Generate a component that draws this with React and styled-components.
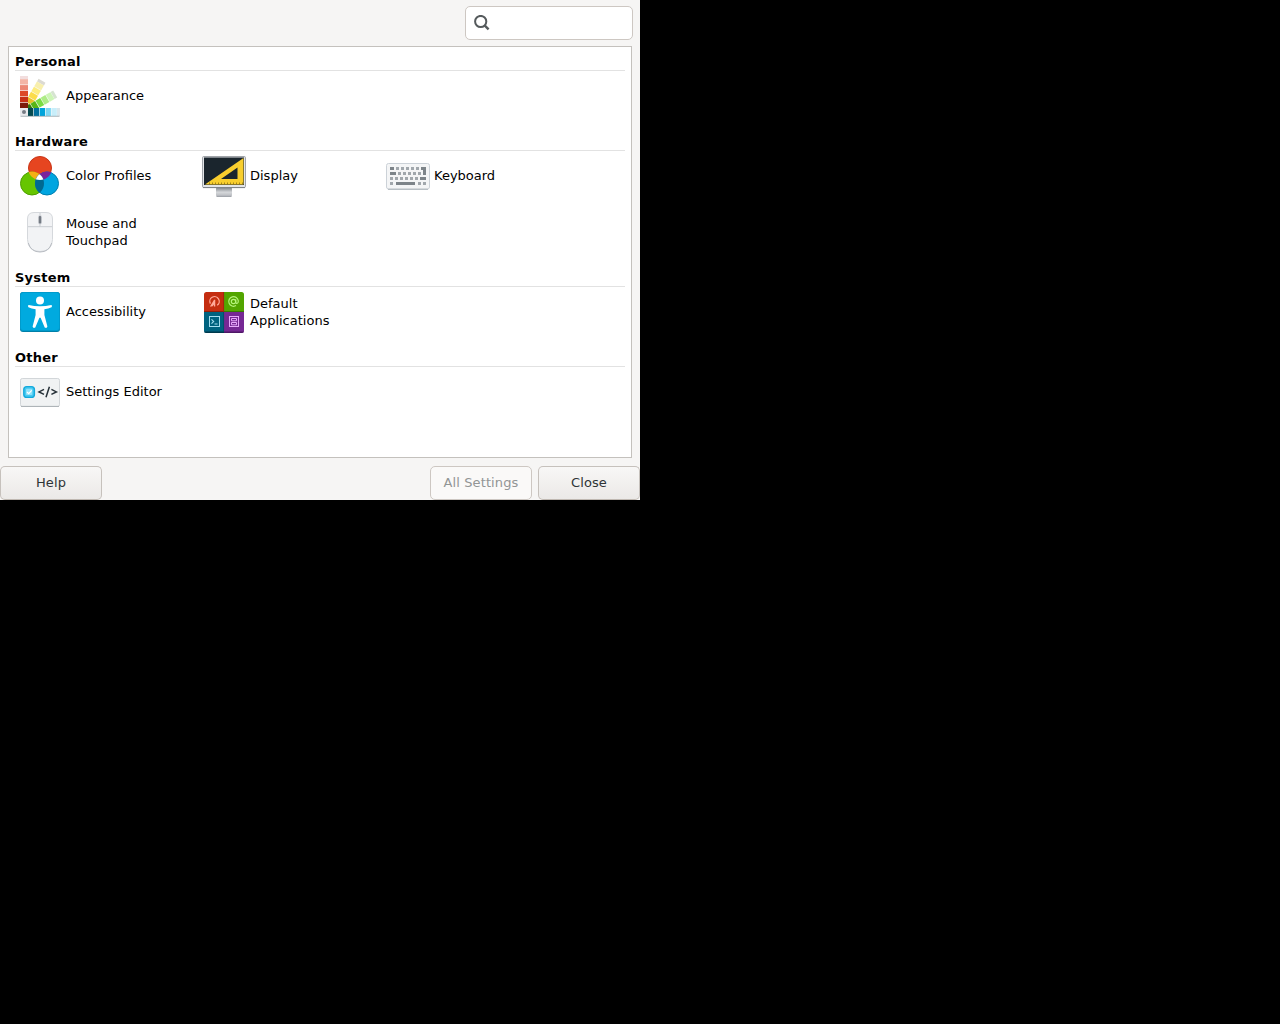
import React from "react";
import styled, { createGlobalStyle } from "styled-components";

const GlobalStyle = createGlobalStyle`
  html, body { margin: 0; background: #000; }
  * { box-sizing: border-box; }
`;

const Window = styled.main`
  width: 640px;
  height: 500px;
  display: flex;
  flex-direction: column;
  background: #f6f5f4;
  color: #000;
  font: 13px/17px "DejaVu Sans", sans-serif;
`;

const TopBar = styled.header`
  display: flex;
  justify-content: flex-end;
  padding: 6px 7px 6px 0;
`;

const SearchField = styled.label`
  width: 168px;
  height: 34px;
  display: flex;
  align-items: center;
  padding: 0 8px;
  background: #fff;
  border: 1px solid #cdc7c2;
  border-radius: 5px;
`;

const SearchInput = styled.input`
  flex: 1;
  min-width: 0;
  border: 0;
  outline: 0;
  background: transparent;
  font: inherit;
`;

const Panel = styled.div`
  height: 412px;
  margin: 0 8px;
  padding: 6px 6px 0;
  background: #fff;
  border: 1px solid #c4c1bd;
`;

const Section = styled.section`
  padding-bottom: 12px;
`;

const Heading = styled.h2`
  height: 18px;
  margin: 0;
  font-size: 13px;
  line-height: 17px;
  font-weight: bold;
  letter-spacing: 0.22px;
  border-bottom: 1px solid #e2e2e2;
`;

const Grid = styled.div`
  display: grid;
  grid-template-columns: repeat(3, 184px);
  grid-auto-rows: 50px;
  row-gap: 6px;
  padding-left: 1px;
`;

const Item = styled.div`
  display: flex;
  align-items: center;
  gap: 2px;
`;

const ItemLabel = styled.span`
  width: 110px;
  padding-bottom: 1px;
`;

const Footer = styled.footer`
  display: flex;
  gap: 6px;
  margin-top: 8px;
`;

const Button = styled.button`
  width: 102px;
  height: 34px;
  padding: 0 0 1px;
  font: inherit;
  letter-spacing: 0.1px;
  color: ${(p) => (p.disabled ? "#929595" : "#2e3436")};
  background: ${(p) => (p.disabled ? "#faf9f8" : "linear-gradient(#f8f7f6, #ebe9e7)")};
  border: 1px solid ${(p) => (p.disabled ? "#cdc7c2" : "#c6c1bc")};
  border-bottom-color: ${(p) => (p.disabled ? "#cdc7c2" : "#bfb8b1")};
  border-radius: 5px;
  margin-right: ${(p) => (p.$lead ? "auto" : "0")};
`;

const IconSvg = styled.svg`
  flex: none;
  display: block;
`;

const Icon = ({ children }) => (
  <IconSvg width="48" height="48" viewBox="0 0 48 48" fill="none">
    {children}
  </IconSvg>
);

const Strip = ({ angle, colors, label }) => (
  <g transform={`rotate(${angle} 8 40)`}>
    <rect x="4" y="4" width="8" height="36" fill="#fafafa" />
    <rect x="4" y="4" width="8" height="3" fill={label} />
    {colors.map((c, i) => (
      <rect key={c} x="4" y={7.2 + i * 5.9} width="8" height="5.3" fill={c} />
    ))}
  </g>
);

const AppearanceIcon = () => (
  <Icon>
    <Strip angle={30} label="#dcdad2" colors={["#f8efad", "#fdec7e", "#fbdc4a", "#e8bf25", "#b08c18"]} />
    <Strip angle={60} label="#d6e4d0" colors={["#cdf5b6", "#aeec86", "#7bdc42", "#57b515", "#347b0b"]} />
    <Strip angle={90} label="#dce7ec" colors={["#c8eefa", "#7dd6f2", "#00a4db", "#006f9e", "#064a50"]} />
    <Strip angle={0} label="#f2dede" colors={["#f3b5a6", "#ec8875", "#dd4928", "#c73117", "#7c1b0b"]} />
    <rect x="4" y="36" width="8" height="8" rx="1" fill="#e9eaed" />
    <circle cx="8" cy="40" r="2" fill="#777c85" />
    <path d="M4.5 44.3h39" stroke="#8a9aa0" strokeWidth=".7" />
  </Icon>
);

const ColorIcon = () => (
  <Icon>
    <defs>
      <clipPath id="clipRed"><circle cx="24" cy="16" r="12" /></clipPath>
      <clipPath id="clipGreen"><circle cx="16" cy="31.5" r="12" /></clipPath>
    </defs>
    <circle cx="24" cy="16" r="11.5" fill="#e64520" stroke="#c93416" />
    <circle cx="16" cy="31.5" r="11.5" fill="#66c500" stroke="#4f9f00" />
    <circle cx="31" cy="31.5" r="11.5" fill="#00a5e0" stroke="#007fae" />
    <g clipPath="url(#clipRed)">
      <circle cx="16" cy="31.5" r="12" fill="#f4af16" />
      <circle cx="31" cy="31.5" r="12" fill="#7b239b" />
    </g>
    <g clipPath="url(#clipGreen)">
      <circle cx="31" cy="31.5" r="12" fill="#006a91" />
      <g clipPath="url(#clipRed)"><circle cx="31" cy="31.5" r="12" fill="#fff" /></g>
    </g>
  </Icon>
);

const DisplayIcon = () => (
  <Icon>
    <defs>
      <linearGradient id="stand" x1="0" y1="0" x2="0" y2="1">
        <stop stopColor="#777d84" /><stop offset=".55" stopColor="#d5d7da" /><stop offset="1" stopColor="#b5b8bd" />
      </linearGradient>
    </defs>
    <rect x="16" y="35" width="16" height="9.5" rx="1.5" fill="url(#stand)" />
    <path d="M16.5 44.4h15" stroke="#8b9097" strokeWidth=".8" />
    <rect x="2.5" y="4.5" width="43" height="31" rx="1.2" fill="#e3e5e8" stroke="#a0a4a9" />
    <path d="M3 35.6h42" stroke="#7d8287" />
    <rect x="4" y="5.5" width="40" height="27.5" fill="#1a252d" />
    <path fillRule="evenodd" d="M5 32.5 43.5 6v26.5ZM21 27h16.5V15.5Z" fill="#f8ce2e" />
    <path d="M9 31.5h34" stroke="#8f7414" strokeWidth="2" strokeDasharray=".8 2.2" />
  </Icon>
);

const Keys = ({ y, xs }) => xs.map((x) => <rect key={x} x={x} y={y} width="3" height="3" />);

const KeyboardIcon = () => (
  <Icon>
    <rect x="2.5" y="11.5" width="43" height="25.5" rx="2" fill="#f4f5f6" stroke="#ccd2d8" />
    <path d="M4 37.3h40" stroke="#adb4bb" />
    <g fill="#a1a7ac">
      <Keys y={15} xs={[12, 17, 22, 27, 32]} />
      <Keys y={20} xs={[14, 19, 24, 29, 34]} />
      <Keys y={25} xs={[6, 11, 16, 21, 26, 31]} />
      <Keys y={30} xs={[6, 34, 39]} />
    </g>
    <g fill="#7d8489">
      <path d="M6 15h4v3H6zM6 20h6v3H6zM36 25h6v3h-6zM12 30h19v3H12zM37 15h5v8h-3v-5h-2z" />
    </g>
  </Icon>
);

const MouseIcon = () => (
  <Icon>
    <path d="M11.5 11Q11.5 4.5 18 4.5H30Q36.5 4.5 36.5 11V31.5Q36 43.5 24 43.5T11.5 31.5Z" fill="#f2f3f5" stroke="#d5d8dc" />
    <path d="M12.3 35Q15 44 24 44T35.7 35" stroke="#b9bdc3" />
    <path d="M12 18.7h24M24 5v3M24 16v3" stroke="#c9cdd2" />
    <rect x="22.1" y="7" width="3.8" height="9.5" rx="1.9" fill="#d0d3d8" />
    <rect x="22.8" y="8" width="2.4" height="7.5" rx="1" fill="#747a83" />
  </Icon>
);

const AccessibilityIcon = () => (
  <Icon>
    <rect x="4" y="4" width="40" height="40" rx="3" fill="#007fa8" />
    <rect x="4.5" y="4.5" width="39" height="38" rx="2.5" fill="#00aadf" stroke="#009bcc" />
    <circle cx="24" cy="12.4" r="4" fill="#fff" />
    <path d="M12.8 17Q18 18.3 24 18.3T35.2 17Q36.8 17.6 35.6 19.2Q32.5 20.6 28.4 21.2V27L31.4 38.6Q30.8 40.7 28.7 39.5L24.6 29.7H23.4L19.3 39.5Q17.2 40.7 16.6 38.6L19.6 27V21.2Q15.5 20.6 12.4 19.2Q11.2 17.6 12.8 17Z" fill="#fff" />
  </Icon>
);

const ApplicationsIcon = () => (
  <Icon>
    <defs><clipPath id="tile"><rect x="4" y="4" width="40" height="41" rx="2.5" /></clipPath></defs>
    <g clipPath="url(#tile)">
      <rect x="4" y="4" width="20" height="20" fill="#c42d10" />
      <rect x="24" y="4" width="20" height="20" fill="#52a500" />
      <rect x="4" y="24" width="20" height="21" fill="#006380" />
      <rect x="24" y="24" width="20" height="21" fill="#762894" />
      <path d="M4 23.5h20" stroke="#8f200c" />
      <path d="M24 23.5h20" stroke="#377900" />
      <path d="M4 44.3h20" stroke="#00394c" strokeWidth="1.4" />
      <path d="M24 44.3h20" stroke="#4e1766" strokeWidth="1.4" />
      <path d="M23.6 4v20" stroke="#992610" strokeWidth=".8" />
      <path d="M23.6 24v20" stroke="#004c63" strokeWidth=".8" />
    </g>
    <path d="M10.4 15.6A4.7 4.7 0 1 1 17.2 17.2" stroke="#ffa999" strokeWidth="1.3" />
    <path d="M14.6 11.8V18.6M14.6 12 10.6 18.6M14.6 14.5 12 18" stroke="#ffa999" strokeWidth="1.3" />
    <circle cx="33.5" cy="13.5" r="2.2" stroke="#b6f47c" strokeWidth="1.2" />
    <path d="M35.7 11.2v3.2q.4 1.3 1.6.9 1.2-.6 1-2.4a4.8 4.8 0 1 0-2.3 4.7" stroke="#b6f47c" strokeWidth="1.2" />
    <rect x="9.5" y="28.5" width="10" height="10" stroke="#a3def0" />
    <path d="m11.5 31.3 2.2 2.2-2.2 2.2M14.5 36h3" stroke="#a3def0" strokeWidth="1.1" />
    <rect x="29.5" y="28.5" width="9" height="10" stroke="#e7a9fb" />
    <path d="M31.5 30.5h5v2.3h-5zM31.5 34.5h5v2.3h-5z" stroke="#e7a9fb" />
  </Icon>
);

const EditorIcon = () => (
  <Icon>
    <rect x="4.5" y="10.5" width="39" height="28" rx="1.8" fill="#f0f2f3" stroke="#d2d6d9" />
    <path d="M5 38.4h38" stroke="#abb0b5" />
    <rect x="7.8" y="18.6" width="10.6" height="10.8" rx="3" fill="#47c9f1" stroke="#12a9dc" strokeWidth="1.4" />
    <rect x="10" y="20.8" width="6.3" height="6.3" rx="1" fill="#8ee2fa" />
    <path d="m11 24 1.7 1.7 3-3.4" stroke="#fff" strokeWidth="1.2" />
    <path d="m28 21.4-5 2.5 5 2.5M35.4 21.4l5 2.5-5 2.5M33.4 18.8 30 29.3" stroke="#273239" strokeWidth="1.5" />
  </Icon>
);

const SearchIcon = () => (
  <IconSvg width="16" height="16" viewBox="0 0 16 16" fill="none" stroke="#555a5c" strokeWidth="2">
    <circle cx="6.7" cy="6.5" r="5.6" />
    <path d="m10.6 10.4 4 4" strokeWidth="2.4" />
  </IconSvg>
);

const sections = [
  { title: "Personal", items: [["Appearance", AppearanceIcon]] },
  {
    title: "Hardware",
    items: [
      ["Color Profiles", ColorIcon],
      ["Display", DisplayIcon],
      ["Keyboard", KeyboardIcon],
      ["Mouse and Touchpad", MouseIcon],
    ],
  },
  {
    title: "System",
    items: [
      ["Accessibility", AccessibilityIcon],
      ["Default Applications", ApplicationsIcon],
    ],
  },
  { title: "Other", items: [["Settings Editor", EditorIcon]] },
];

export default function App() {
  return (
    <>
      <GlobalStyle />
      <Window>
        <TopBar>
          <SearchField>
            <SearchIcon />
            <SearchInput aria-label="Search" />
          </SearchField>
        </TopBar>
        <Panel>
          {sections.map(({ title, items }) => (
            <Section key={title}>
              <Heading>{title}</Heading>
              <Grid>
                {items.map(([name, Glyph]) => (
                  <Item key={name}>
                    <Glyph />
                    <ItemLabel>{name}</ItemLabel>
                  </Item>
                ))}
              </Grid>
            </Section>
          ))}
        </Panel>
        <Footer>
          <Button $lead>Help</Button>
          <Button disabled>All Settings</Button>
          <Button>Close</Button>
        </Footer>
      </Window>
    </>
  );
}
